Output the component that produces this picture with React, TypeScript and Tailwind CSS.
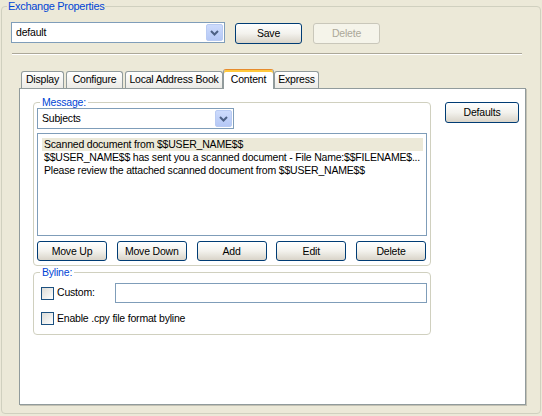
import React from 'react';

const Chevron = () => (
  <svg width="9" height="6" viewBox="0 0 9 6" className="block">
    <polyline points="1,1 4.5,4.5 8,1" fill="none" stroke="#4D6185" strokeWidth="2" />
  </svg>
);

interface ComboProps {
  value: string;
  className?: string;
}

const Combo: React.FC<ComboProps> = ({ value, className }) => (
  <div className={`flex items-stretch border border-[#7F9DB9] bg-white p-[1px] ${className}`}>
    <div className="flex-1 pl-[3px] flex items-center text-black">{value}</div>
    <div className="w-[17px] rounded-[2px] border border-[#B9CBF3] bg-linear-to-b from-[#CDDBFC] to-[#B5C8F6] flex items-center justify-center">
      <Chevron />
    </div>
  </div>
);

interface BtnProps {
  label: string;
  className?: string;
  disabled?: boolean;
}

const Btn: React.FC<BtnProps> = ({ label, className, disabled }) =>
  disabled ? (
    <button className={`rounded-[3px] border border-[#C9C7BA] bg-[#F5F4EA] text-[#ACA899] leading-none ${className}`}>
      {label}
    </button>
  ) : (
    <button className={`rounded-[3px] border border-[#003C74] bg-linear-to-b from-white via-[#F3F2ED] to-[#D9D4C9] text-black leading-none ${className}`}>
      {label}
    </button>
  );

const Check: React.FC = () => (
  <div className="w-[13px] h-[13px] shrink-0 border border-[#1C5180] bg-linear-to-br from-[#DCDCD7] to-white" />
);

const Group: React.FC<{ title: string; className?: string; children: React.ReactNode }> = ({ title, className, children }) => (
  <fieldset className={`border border-[#D0D0BF] rounded-[4px] px-[3px] ${className}`}>
    <legend className="ml-[3px] px-[2px] leading-[12px] text-[#0046D5]">{title}</legend>
    {children}
  </fieldset>
);

const tabs = ['Display', 'Configure', 'Local Address Book', 'Content', 'Express'];
const tabWidths: Record<string, string> = {
  Display: 'w-[43px]',
  Configure: 'w-[57px]',
  'Local Address Book': 'w-[98px]',
  Content: 'w-[51px]',
  Express: 'w-[45px]',
};

// second subject is shown already clipped by the list
const subjects = [
  'Scanned document from $$USER_NAME$$',
  '$$USER_NAME$$ has sent you a scanned document - File Name:$$FILENAME$...',
  'Please review the attached scanned document from $$USER_NAME$$',
];

export default function App() {
  return (
    <div className='w-[542px] h-[416px] bg-[#ECE9D8] overflow-hidden text-[10.5px] tracking-[-0.2px] text-black font-["Liberation_Sans",Arial,sans-serif]'>
      <fieldset className="ml-[1px] w-[540px] h-[414px] border border-[#D0D0BF] rounded-[4px]">
        <legend className="ml-[5px] px-[1px] leading-[13px] text-[11px] tracking-[-0.3px] text-[#0046D5]">Exchange Properties</legend>
        <div className="pl-[9px] pt-[9px]">
          <div className="flex items-start">
            <Combo value="default" className="w-[214px] h-[21px]" />
            <Btn label="Save" className="ml-[10px] mt-[1px] w-[67px] h-[21px]" />
            <Btn label="Delete" disabled className="ml-[11px] mt-[1px] w-[67px] h-[21px]" />
          </div>
          <div className="ml-[1px] mt-[9px] w-[510px] h-[2px] border-t border-b border-t-[#ACA899] border-b-white" />

          <div className="ml-[10px] mt-[14px] flex items-end gap-[2px]">
            {tabs.map((t) =>
              t === 'Content' ? (
                <div
                  key={t}
                  className={`${tabWidths[t]} h-[20px] -mx-[2px] -mb-[1px] relative z-10 rounded-t-[3px] border border-b-0 border-[#919B9C] border-t-[#E68B2C] shadow-[inset_0_2px_0_#FFC83C] bg-white flex items-center justify-center pt-[1px] whitespace-nowrap`}
                >
                  {t}
                </div>
              ) : (
                <div
                  key={t}
                  className={`${tabWidths[t]} h-[17px] rounded-t-[3px] border border-b-0 border-[#919B9C] bg-linear-to-b from-white to-[#ECEBE6] flex items-center justify-center whitespace-nowrap`}
                >
                  {t}
                </div>
              )
            )}
          </div>

          <div className="ml-[8px] w-[507px] h-[317px] border border-[#919B9C] bg-white shadow-[1px_1px_0_#C3C1B3] flex items-start pl-[13px] pt-[7px]">
            <div className="w-[397px] flex flex-col">
              <Group title="Message:" className="pb-[4px]">
                <Combo value="Subjects" className="w-[197px] h-[21px]" />
                <div className="mt-[4px] w-[390px] h-[103px] border border-[#7F9DB9] bg-white pl-[4px] pr-[3px] pt-[4px]">
                  {subjects.map((s, i) => (
                    <div
                      key={i}
                      className={`h-[13px] leading-[13px] pl-[2px] whitespace-nowrap ${i === 0 ? 'bg-[#ECE9D8]' : ''}`}
                    >
                      {s}
                    </div>
                  ))}
                </div>
                <div className="mt-[5px] w-[389px] flex justify-between">
                  <Btn label="Move Up" className="w-[70px] h-[20px]" />
                  <Btn label="Move Down" className="w-[70px] h-[20px]" />
                  <Btn label="Add" className="w-[70px] h-[20px]" />
                  <Btn label="Edit" className="w-[70px] h-[20px]" />
                  <Btn label="Delete" className="w-[70px] h-[20px]" />
                </div>
              </Group>

              <Group title="Byline:" className="pb-[9px]">
                <div className="pl-[4px]">
                  <div className="mt-[5px] flex items-center h-[20px]">
                    <Check />
                    <span className="ml-[3px] w-[58px] shrink-0">Custom:</span>
                    <div className="w-[312px] h-[20px] shrink-0 border border-[#7F9DB9] bg-white" />
                  </div>
                  <div className="mt-[9px] flex items-center h-[13px]">
                    <Check />
                    <span className="ml-[3px]">Enable .cpy file format byline</span>
                  </div>
                </div>
              </Group>
            </div>

            <Btn label="Defaults" className="ml-[15px] mt-[6px] w-[74px] h-[21px]" />
          </div>
        </div>
      </fieldset>
    </div>
  );
}
